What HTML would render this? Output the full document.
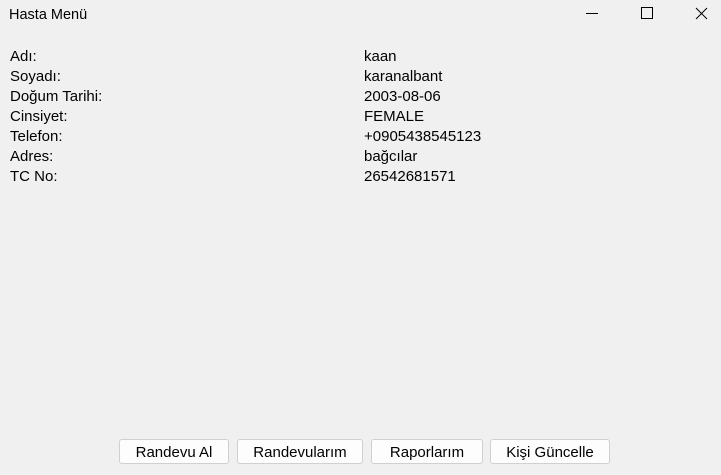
<!DOCTYPE html>
<html><head><meta charset="utf-8"><style>
html,body{margin:0;padding:0;}
body{width:721px;height:475px;background:#f0f0f0;position:relative;overflow:hidden;font-family:"Liberation Sans","DejaVu Sans",sans-serif;font-size:15px;color:#000;}
.t{position:absolute;white-space:nowrap;line-height:20px;}
.b{position:absolute;top:439px;height:25px;background:#fdfdfd;border:1px solid #d0d0d0;border-radius:3px;box-sizing:border-box;text-align:center;line-height:25px;font-size:15px;}
</style></head><body>
<div class="t" style="left:9px;top:5px;font-size:14.5px;">Hasta Menü</div>
<svg style="position:absolute;left:0;top:0" width="721" height="30">
<line x1="586" y1="13.5" x2="598" y2="13.5" stroke="#000" stroke-width="1"/>
<rect x="641.5" y="7.5" width="11" height="11" fill="none" stroke="#000" stroke-width="1"/>
<line x1="696" y1="8" x2="707" y2="19" stroke="#000" stroke-width="1"/>
<line x1="707" y1="8" x2="696" y2="19" stroke="#000" stroke-width="1"/>
</svg>
<div class="t" style="left:10px;top:47px">Adı:</div>
<div class="t" style="left:10px;top:67px">Soyadı:</div>
<div class="t" style="left:10px;top:87px">Doğum Tarihi:</div>
<div class="t" style="left:10px;top:107px">Cinsiyet:</div>
<div class="t" style="left:10px;top:127px">Telefon:</div>
<div class="t" style="left:10px;top:147px">Adres:</div>
<div class="t" style="left:10px;top:167px">TC No:</div>
<div class="t" style="left:364px;top:47px">kaan</div>
<div class="t" style="left:364px;top:67px">karanalbant</div>
<div class="t" style="left:364px;top:87px">2003-08-06</div>
<div class="t" style="left:364px;top:107px">FEMALE</div>
<div class="t" style="left:364px;top:127px">+0905438545123</div>
<div class="t" style="left:364px;top:147px">bağcılar</div>
<div class="t" style="left:364px;top:167px">26542681571</div>
<div class="b" style="left:119px;width:110px">Randevu Al</div>
<div class="b" style="left:237px;width:126px">Randevularım</div>
<div class="b" style="left:371px;width:112px">Raporlarım</div>
<div class="b" style="left:490px;width:120px">Kişi Güncelle</div>
</body></html>
